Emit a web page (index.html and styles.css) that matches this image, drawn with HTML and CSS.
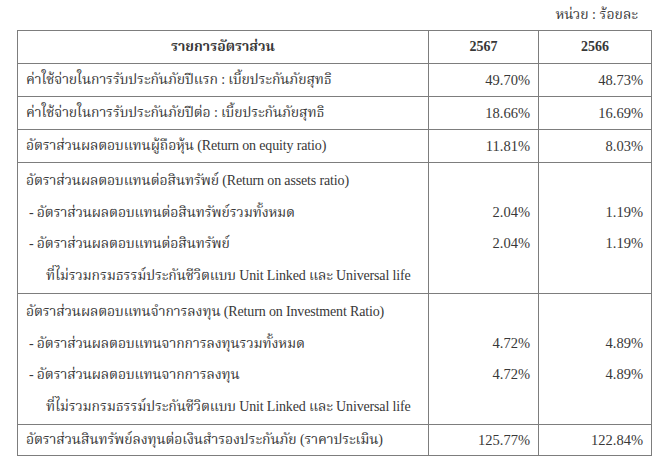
FILE: index.html
```html
<!DOCTYPE html>
<html lang="th">
<head>
<meta charset="utf-8">
<link rel="stylesheet" href="styles.css">
</head>
<body>
<div class="page">
  <div class="unit">หน่วย : ร้อยละ</div>
  <table class="ratios">
    <colgroup>
      <col class="c-name">
      <col class="c-val">
      <col class="c-val2">
    </colgroup>
    <thead>
      <tr class="row-h">
        <th class="name">รายการอัตราส่วน</th>
        <th>2567</th>
        <th>2566</th>
      </tr>
    </thead>
    <tbody>
      <tr class="row-1">
        <td class="name">ค่าใช้จ่ายในการรับประกันภัยปีแรก : เบี้ยประกันภัยสุทธิ</td>
        <td class="num">49.70%</td>
        <td class="num">48.73%</td>
      </tr>
      <tr class="row-1">
        <td class="name">ค่าใช้จ่ายในการรับประกันภัยปีต่อ : เบี้ยประกันภัยสุทธิ</td>
        <td class="num">18.66%</td>
        <td class="num">16.69%</td>
      </tr>
      <tr class="row-1">
        <td class="name">อัตราส่วนผลตอบแทนผู้ถือหุ้น (Return on equity ratio)</td>
        <td class="num">11.81%</td>
        <td class="num">8.03%</td>
      </tr>
      <tr class="row-s">
        <td class="name">
          <div class="ln">อัตราส่วนผลตอบแทนต่อสินทรัพย์ (Return on assets ratio)</div>
          <div class="ln sub">- อัตราส่วนผลตอบแทนต่อสินทรัพย์รวมทั้งหมด</div>
          <div class="ln sub">- อัตราส่วนผลตอบแทนต่อสินทรัพย์</div>
          <div class="ln sub2">ที่ไม่รวมกรมธรรม์ประกันชีวิตแบบ Unit Linked และ Universal life</div>
        </td>
        <td class="num">
          <div class="ln">&nbsp;</div>
          <div class="ln">2.04%</div>
          <div class="ln">2.04%</div>
          <div class="ln">&nbsp;</div>
        </td>
        <td class="num">
          <div class="ln">&nbsp;</div>
          <div class="ln">1.19%</div>
          <div class="ln">1.19%</div>
          <div class="ln">&nbsp;</div>
        </td>
      </tr>
      <tr class="row-s">
        <td class="name">
          <div class="ln">อัตราส่วนผลตอบแทนจำการลงทุน (Return on Investment Ratio)</div>
          <div class="ln sub">- อัตราส่วนผลตอบแทนจากการลงทุนรวมทั้งหมด</div>
          <div class="ln sub">- อัตราส่วนผลตอบแทนจากการลงทุน</div>
          <div class="ln sub2">ที่ไม่รวมกรมธรรม์ประกันชีวิตแบบ Unit Linked และ Universal life</div>
        </td>
        <td class="num">
          <div class="ln">&nbsp;</div>
          <div class="ln">4.72%</div>
          <div class="ln">4.72%</div>
          <div class="ln">&nbsp;</div>
        </td>
        <td class="num">
          <div class="ln">&nbsp;</div>
          <div class="ln">4.89%</div>
          <div class="ln">4.89%</div>
          <div class="ln">&nbsp;</div>
        </td>
      </tr>
      <tr class="row-l">
        <td class="name">อัตราส่วนสินทรัพย์ลงทุนต่อเงินสำรองประกันภัย (ราคาประเมิน)</td>
        <td class="num">125.77%</td>
        <td class="num">122.84%</td>
      </tr>
    </tbody>
  </table>
</div>
</body>
</html>
```
FILE: styles.css
```css
html, body {
  margin: 0;
  padding: 0;
  background: #ffffff;
}

body {
  font-family: "Liberation Serif", "Noto Serif Thai", "Noto Sans Thai", serif;
  font-size: 14px;
  color: #383838;
}

.page {
  padding: 6px 0 0 17px;
  width: 634px;
}

.unit {
  text-align: right;
  padding-right: 13px;
  height: 24px;
  line-height: 18px;
}

.ratios {
  width: 634px;
  border-collapse: collapse;
  table-layout: fixed;
}

.c-name { width: 411px; }
.c-val { width: 110px; }
.c-val2 { width: 113px; }

.ratios th,
.ratios td {
  border: 1px solid #7d7d7d;
  padding: 0 8px;
  vertical-align: middle;
  white-space: nowrap;
}

.ratios th {
  font-weight: bold;
  text-align: center;
  height: 32px;
}

.ratios td.name {
  letter-spacing: -0.15px;
}

.ratios td.num {
  text-align: right;
  font-size: 14.5px;
}

.row-1 td {
  height: 32px;
}

.row-s td {
  height: 128px;
  vertical-align: top;
  padding-top: 2px;
}

.row-l td {
  height: 30px;
}

.ln {
  height: 31.5px;
  line-height: 31px;
}

.sub {
  padding-left: 3px;
}

.sub2 {
  padding-left: 20px;
}
```
